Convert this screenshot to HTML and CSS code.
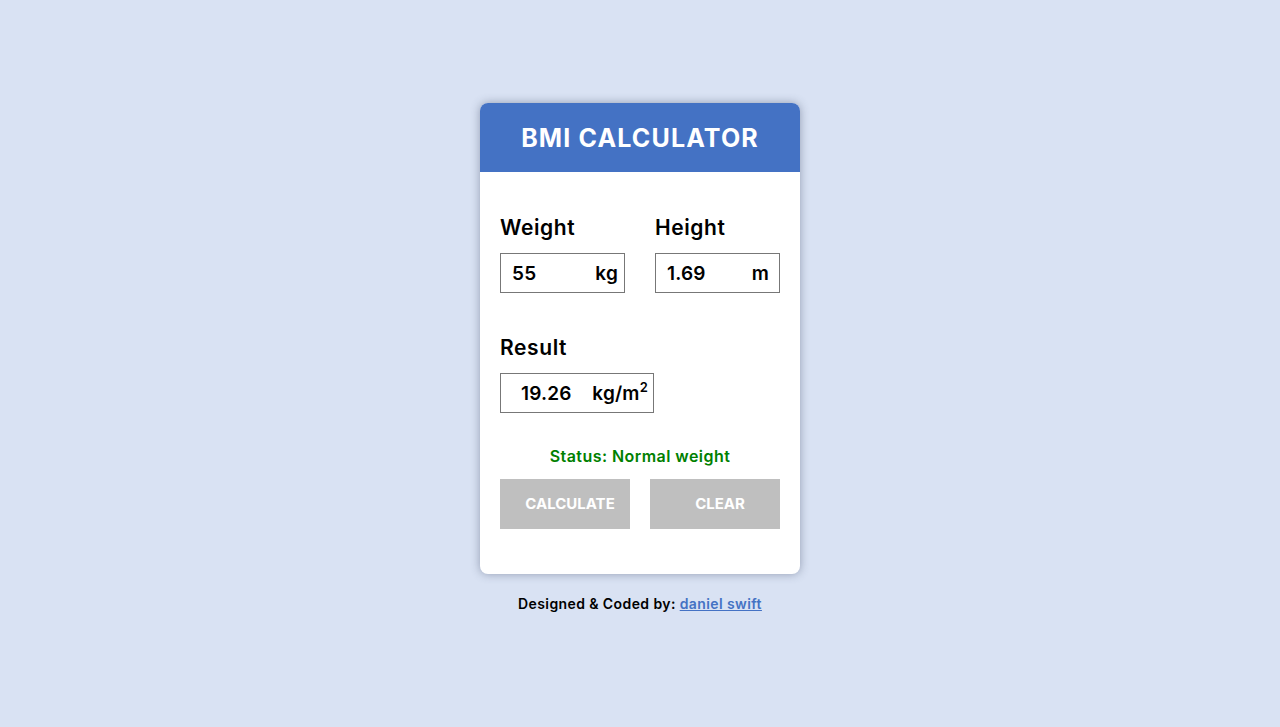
FILE: index.html
```html
<!DOCTYPE html>
<html lang="en">
<head>
<meta charset="utf-8">
<title>BMI Calculator</title>
<link rel="stylesheet" href="styles.css">
</head>
<body>
<main class="page">
  <section class="card">
    <header class="card-head">
      <h1 class="title">BMI CALCULATOR</h1>
    </header>
    <div class="card-body">
      <div class="fields">
        <div class="field">
          <label class="label">Weight</label>
          <div class="box box-small">
            <span class="value">55</span>
            <span class="unit unit-kg">kg</span>
          </div>
        </div>
        <div class="field">
          <label class="label">Height</label>
          <div class="box box-small">
            <span class="value">1.69</span>
            <span class="unit unit-m">m</span>
          </div>
        </div>
      </div>
      <div class="field result-field">
        <label class="label">Result</label>
        <div class="box box-result">
          <span class="value value-result">19.26</span>
          <span class="unit unit-result">kg/m<sup class="sup">2</sup></span>
        </div>
      </div>
      <p class="status">Status: Normal weight</p>
      <div class="buttons">
        <button class="btn btn-calc">CALCULATE</button>
        <button class="btn btn-clear">CLEAR</button>
      </div>
    </div>
  </section>
  <p class="footer">Designed &amp; Coded by: <a class="footer-link" href="#">daniel swift</a></p>
</main>
</body>
</html>
```

FILE: styles.css
```css
* { box-sizing: border-box; }
html, body { margin: 0; padding: 0; }
body {
  background: #d9e2f3;
  font-family: "Inter", "Noto Sans", sans-serif;
  color: #000;
  height: 727px;
}
.page {
  display: flex;
  flex-direction: column;
  align-items: center;
  padding-top: 103px;
}
.card {
  width: 320px;
  background: #fff;
  border-radius: 8px;
  box-shadow: 0 0 10px rgba(60, 70, 100, 0.45);
  overflow: hidden;
}
.card-head {
  background: #4472c4;
  height: 69px;
  display: flex;
  align-items: center;
  justify-content: center;
}
.title {
  margin: 0;
  color: #fff;
  font-size: 25px;
  font-weight: 700;
  letter-spacing: 1.15px;
}
.card-body {
  padding: 41px 20px 45px;
}
.fields {
  display: flex;
  gap: 30px;
}
.field {
  display: flex;
  flex-direction: column;
}
.label {
  font-size: 21px;
  font-weight: 600;
  line-height: 30px;
  height: 30px;
  margin-bottom: 10px;
  letter-spacing: 0.6px;
}
.box {
  height: 40px;
  border: 1px solid #777;
  display: flex;
  align-items: center;
  font-size: 19px;
  font-weight: 600;
  letter-spacing: 0.2px;
}
.box-small { width: 125px; }
.box-result { width: 154px; }
.value { padding-left: 11px; }
.value-result { padding-left: 20px; }
.unit { margin-left: auto; }
.unit-kg { padding-right: 6px; }
.unit-m { padding-right: 10px; }
.unit-result { padding-right: 5px; }
.sup { font-size: 13px; vertical-align: 8px; line-height: 0; }
.result-field { margin-top: 40px; }
.status {
  margin: 31px 0 0;
  text-align: center;
  color: #008000;
  font-size: 16px;
  font-weight: 600;
  line-height: 24px;
  letter-spacing: 0.45px;
}
.buttons {
  display: flex;
  justify-content: space-between;
  margin-top: 11px;
}
.btn {
  width: 130px;
  height: 50px;
  border: 0;
  background: #bfbfbf;
  color: #fff;
  font-family: inherit;
  font-size: 15px;
  font-weight: 700;
  padding: 0 0 2px 10px;
}
.footer {
  margin: 20px 0 0;
  font-size: 14px;
  font-weight: 600;
  line-height: 20px;
  letter-spacing: 0.4px;
}
.footer-link { color: #4472c4; }
```
